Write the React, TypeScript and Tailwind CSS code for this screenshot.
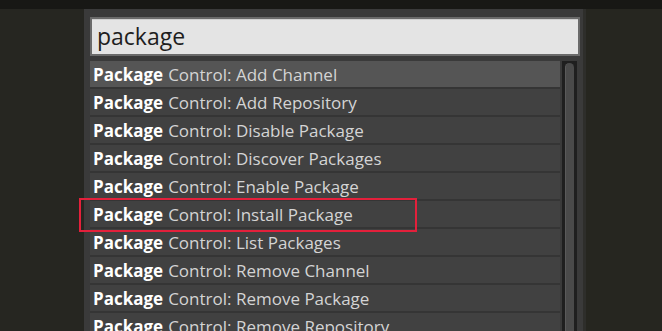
const items = [
  'Add Channel',
  'Add Repository',
  'Disable Package',
  'Discover Packages',
  'Enable Package',
  'Install Package',
  'List Packages',
  'Remove Channel',
  'Remove Package',
  'Remove Repository',
]

export default function App() {
  return (
    <div
      className="w-[662px] h-[331px] overflow-hidden bg-[#262621] flex flex-col"
      style={{ fontFamily: '"Open Sans", "Noto Sans", sans-serif' }}
    >
      <div className="h-[9px] bg-[#181815] shrink-0" />
      <div className="flex flex-1 min-h-0">
        <div className="w-[84px] shrink-0 bg-[#262621]" />
        {/* palette */}
        <div className="w-[502px] shrink-0 bg-[#3a3a3a] border-r-[3px] border-[#2e2e2b] pt-[8px] pl-[6px] pr-[4px] flex flex-col">
          <div className="h-[39px] w-[490px] bg-[#e4e4e4] border-2 border-[#6a6a6a] shadow-[inset_0_1px_0_#cfcfcf] flex items-center pl-[5px]">
            <span className="text-[23px] leading-none text-[#1e1e1e] pb-[1px]">package</span>
          </div>
          <div className="flex mt-[5px] flex-1 min-h-0">
            <div className="w-[470px] flex flex-col">
              {items.map((item, i) => (
                <div
                  key={item}
                  className={`relative h-[28px] shrink-0 flex items-center pl-[3px] border-b-2 border-[#353535] text-[17px] leading-none ${
                    i === 0 ? 'bg-[#555555]' : 'bg-[#414141]'
                  }`}
                >
                  <span className="font-bold text-white">Package</span>
                  <span className="ml-[5px] text-[#d4d4d4]">Control: {item}</span>
                  {item === 'Install Package' && (
                    <div className="absolute z-10 left-[-11px] top-[-3px] w-[338px] h-[34px] border-2 border-[#e3203b]" />
                  )}
                </div>
              ))}
            </div>
            <div className="ml-[2px] w-[15px] bg-[#1f1f1f] pt-[2px] flex justify-center">
              <div className="w-[9px] h-full rounded-t-full bg-[#4a4a4a] border-l border-[#5a5a5a]" />
            </div>
          </div>
        </div>
        <div className="flex-1 bg-[#262620]" />
      </div>
    </div>
  )
}
